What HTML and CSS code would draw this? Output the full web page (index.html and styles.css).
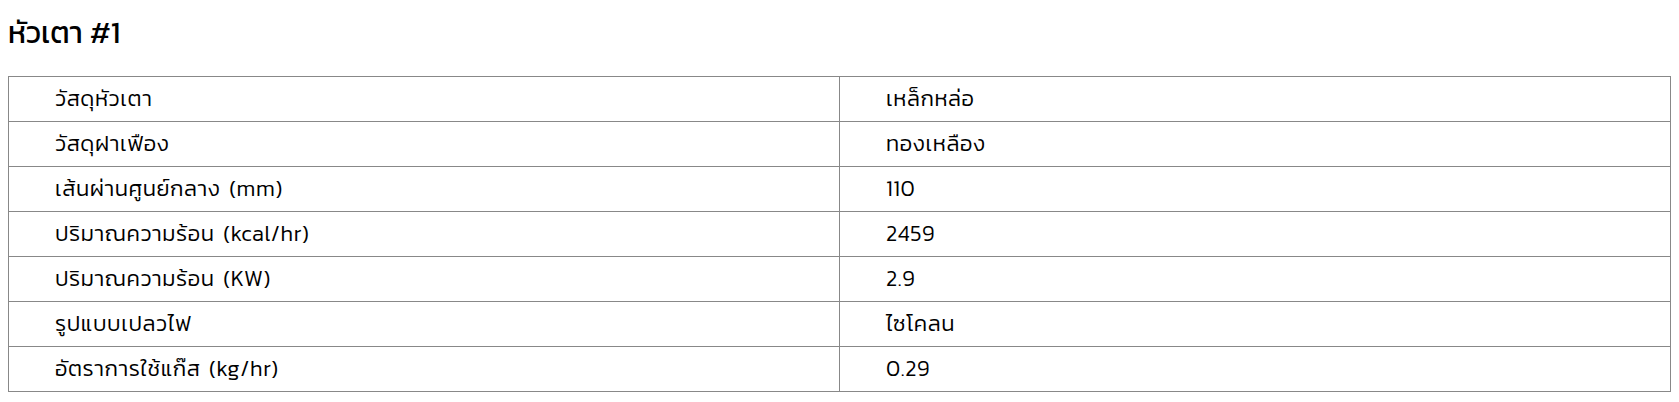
FILE: index.html
```html
<!DOCTYPE html>
<html lang="th">
<head>
<meta charset="utf-8">
<link rel="stylesheet" href="styles.css">
</head>
<body>
<h2 class="title">หัวเตา #1</h2>
<table class="spec">
  <tbody>
    <tr><td class="label">วัสดุหัวเตา</td><td class="value">เหล็กหล่อ</td></tr>
    <tr><td class="label">วัสดุฝาเฟือง</td><td class="value">ทองเหลือง</td></tr>
    <tr><td class="label">เส้นผ่านศูนย์กลาง (mm)</td><td class="value">110</td></tr>
    <tr><td class="label">ปริมาณความร้อน (kcal/hr)</td><td class="value">2459</td></tr>
    <tr><td class="label">ปริมาณความร้อน (KW)</td><td class="value">2.9</td></tr>
    <tr><td class="label">รูปแบบเปลวไฟ</td><td class="value">ไซโคลน</td></tr>
    <tr><td class="label">อัตราการใช้แก๊ส (kg/hr)</td><td class="value">0.29</td></tr>
  </tbody>
</table>
</body>
</html>
```
FILE: styles.css
```css
body {
  margin: 8px;
  font-family: "Kanit", "Noto Sans Thai", sans-serif;
  font-weight: 300;
  color: #000;
  background: #fff;
}
.title {
  margin: 6px 0 24px;
  font-size: 30px;
  font-weight: 400;
  line-height: 38px;
}
.spec {
  width: 100%;
  border-collapse: collapse;
  border: 1px solid #888;
}
.spec td {
  border: 1px solid #888;
  height: 44px;
  padding: 0 46px;
  font-size: 22px;
  line-height: 28px;
  letter-spacing: 0.6px;
  word-spacing: 3px;
  vertical-align: middle;
}
.spec .label {
  width: 738px;
}
```
